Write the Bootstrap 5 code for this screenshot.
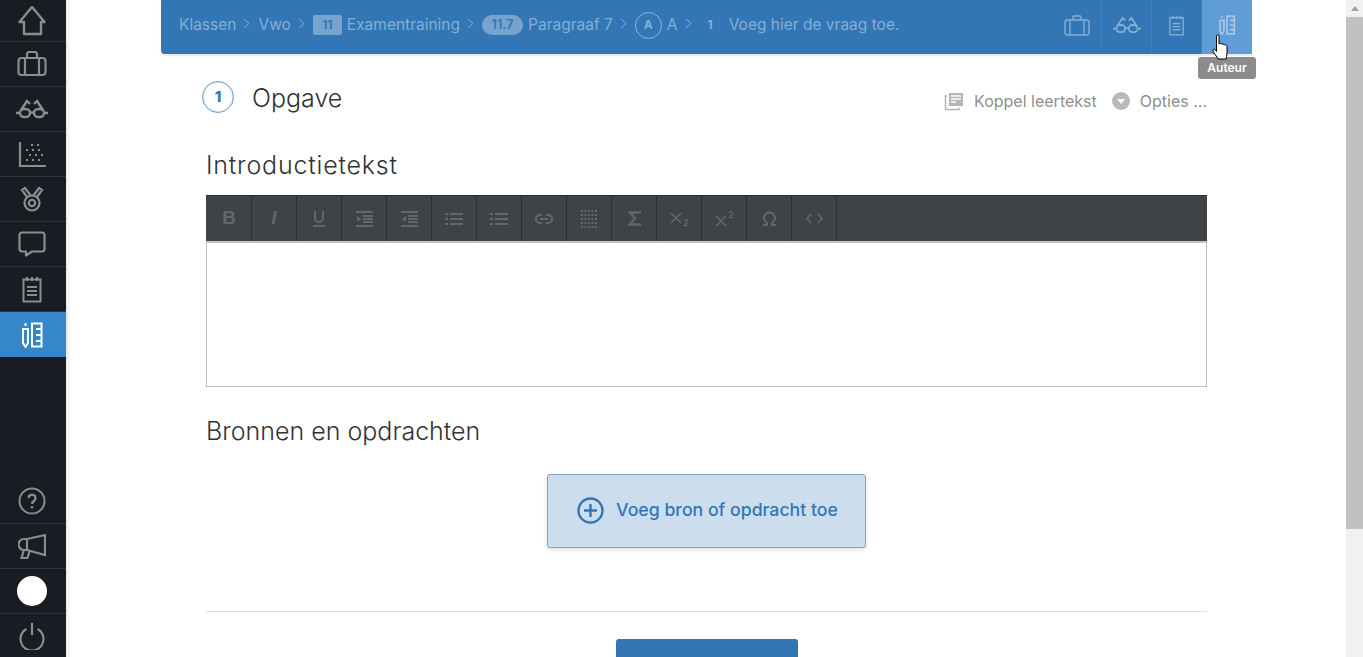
<!DOCTYPE html>
<html lang="nl"><head><meta charset="utf-8"><title>Opgave</title>
<link rel="stylesheet" href="https://cdn.jsdelivr.net/npm/bootstrap@5.3.0/dist/css/bootstrap.min.css">
<style>
html,body{height:657px;overflow:hidden;margin:0}
body{font-family:"Inter","Lato","Liberation Sans",sans-serif;color:#333;background:#fff}
svg{display:block}
.shell{height:657px}
.rail{width:66px;background:#181c23;flex:none}
.rail-item{height:45px;border-bottom:1px solid #31343a;color:#8a8c8f;padding-right:2px}
.rail-item.last{border-bottom:0;height:43px}
.rail-item.on{background:#3587c7;color:#fff;border-bottom:0}
.rail-top .rail-item:first-child{height:42px}
.rail-dot{width:30px;height:30px;border-radius:50%;background:#fff}
.stage{width:1280px;flex:none;position:relative;box-shadow:inset 6px 0 4px -4px #e4e4e4}
.topbar{margin-left:95px;width:1091px;height:54px;background:#3276b5;border-radius:0 0 0 4px;box-shadow:0 2px 2px #e8e8e8;color:#84aed5;font-size:15.500px}
.crumbs{padding-left:18px;height:50px;white-space:nowrap}
.sep{width:7px;height:11px;margin:0 8px 4px 7px;flex:none}
.tag-sq{background:#77a4ce;color:#3a78b3;font-weight:700;font-size:12px;width:29px;height:20px;border-radius:2px;margin-right:5px}
.tag-pill{background:#77a4ce;color:#3a78b3;font-weight:700;font-size:12.500px;width:41px;height:20px;border-radius:10px;margin-right:5px}
.tag-circ{width:27px;height:27px;border-radius:50%;border:1px solid #8fb6da;font-size:12px;font-weight:700;margin-right:5px}
.tools{height:54px;color:#84aed5}
.tool{height:54px;width:50px;border-right:1px solid #3f80bc;padding-bottom:4px}
.tool.hot{background:#609cd5;border-right:0;color:#a9cbe9}
.sheet{margin-left:140px;width:1001px}
.head{height:88px}
.num{width:32px;height:32px;border-radius:50%;border:1px solid #6d9ecb;color:#3276b5;font-weight:800;font-size:15px;margin-left:-4px;margin-top:-2px;box-shadow:inset 0 0 0 1px #d9e6f1}
.title1{font-size:25px;margin:0 0 0 18px;font-weight:300}
.acts{color:#8f8f8f;font-size:16px;gap:10px;margin-top:6px}
.gapr{margin-right:5px}
.h2x{font-size:25px;font-weight:300;margin:0;line-height:30px}
.intro{padding-top:8px;letter-spacing:.8px}
.bar{height:46px;background:#3f4246;border-top:1px solid #2b2d30;margin-top:15px;padding-left:1px}
.btnx{width:45px;height:45px;border-right:1px solid #2c2e31;color:#63666a}
.btnx.ital{font-family:"Liberation Sans",sans-serif;font-weight:900;font-size:19px}
.edit{height:146px;border:1px solid #bdbdbd;border-top:2px solid #c4c4c4}
.addwrap{margin-top:29px}
.addrow{margin-top:28px}
.addbtn{width:319px;height:74px;background:#ccdeed;border:1px solid #7ba6cf;border-radius:3px;color:#3276b5;font-size:17.700px;font-weight:500;box-shadow:0 2px 4px #e0e0e0;gap:12px;padding:0 0 2px 2px}
.rule{border-top:1px solid #ddd;margin-top:63px}
.save{width:182px;height:30px;background:#3276b5;border-radius:3px 3px 0 0;margin-top:27px}
.tip{position:absolute;left:1132px;top:57px;width:58px;height:22px;background:#8c8c8c;color:#fff;font-size:12px;font-weight:600;border-radius:3px}
.hand{position:absolute;left:1146px;top:34px}
.sbar{width:17px;background:#f1f1f1;flex:none}
.sbar-up{height:17px}
.sbar-thumb{height:512px;background:#c1c1c1}
</style></head><body>
<div class="d-flex shell">
<nav class="rail d-flex flex-column justify-content-between">
 <div class="rail-top">
  <div class="rail-item d-flex align-items-center justify-content-center"><svg width="28" height="31" viewBox="0 0 28 31" fill="none" stroke="currentColor" stroke-width="2.400" stroke-linejoin="round"><path d="M1.500 17 14 2l12.500 15H23v12H6V17z"/></svg></div>
  <div class="rail-item d-flex align-items-center justify-content-center"><svg width="30" height="26" viewBox="0 0 30 26" fill="none" stroke="currentColor" stroke-width="2.200"><rect x="1.500" y="7" width="27" height="17" rx="3"/><path d="M10 7V3a2 2 0 0 1 2-2h6a2 2 0 0 1 2 2v4M8 7v17M22 7v17"/></svg></div>
  <div class="rail-item d-flex align-items-center justify-content-center"><svg width="34" height="20" viewBox="0 0 34 20" fill="none" stroke="currentColor" stroke-width="2.400"><rect x="5" y="10" width="10" height="8" rx="4"/><rect x="19" y="10" width="10" height="8" rx="4"/><path d="M15 13.500h4M5 14H1M29 14h4M6 11l6-9 3 3M28 11 22 2l-3 3"/></svg></div>
  <div class="rail-item d-flex align-items-center justify-content-center"><svg width="28" height="27" viewBox="0 0 28 27" fill="none" stroke="currentColor"><path stroke-width="2.200" d="M2 1v24h26"/><path stroke-width="2" stroke-dasharray="2 4" d="M8 19h16M11 14h16M8 9h16"/><path stroke-width="2" stroke-dasharray="2 4" d="M13 4h10"/></svg></div>
  <div class="rail-item d-flex align-items-center justify-content-center"><svg width="26" height="26" viewBox="0 0 26 26" fill="none" stroke="currentColor" stroke-width="2.200"><circle cx="13" cy="17" r="7.500"/><circle cx="13" cy="17" r="3.200"/><path d="M8 11 3 4l3-2 6 8M18 11l5-7-3-2-6 8"/></svg></div>
  <div class="rail-item d-flex align-items-center justify-content-center"><svg width="28" height="27" viewBox="0 0 28 27" fill="none" stroke="currentColor" stroke-width="2.200" stroke-linejoin="round"><path d="M4 1.500h20a2.500 2.500 0 0 1 2.500 2.500v14a2.500 2.500 0 0 1-2.500 2.500H14l-6 4v-4H4A2.500 2.500 0 0 1 1.500 18V4A2.500 2.500 0 0 1 4 1.500z"/></svg></div>
  <div class="rail-item d-flex align-items-center justify-content-center"><svg width="20" height="27" viewBox="0 0 20 27" fill="none" stroke="currentColor" stroke-width="2"><rect x="1.500" y="3.500" width="17" height="22"/><path d="M5 1v4M10 1v4M15 1v4M5 11h10M5 15h10M5 19h10"/></svg></div>
  <div class="rail-item on d-flex align-items-center justify-content-center"><svg width="22" height="26" viewBox="0 0 22 26" fill="none" stroke="currentColor" stroke-width="2"><path d="M2 7h5v14l-2.500 4L2 21z"/><path d="M4.500 1v3"/><rect x="11" y="1.500" width="9.500" height="23"/><path d="M15 7h5M15 13h5M15 19h5"/></svg></div>
 </div>
 <div>
  <div class="rail-item d-flex align-items-center justify-content-center"><svg width="28" height="28" viewBox="0 0 28 28" fill="none" stroke="currentColor" stroke-width="2"><circle cx="14" cy="14" r="12.500"/><path stroke-width="2.400" d="M10.500 11a3.500 3.500 0 1 1 5.500 3c-1.400 1-2 1.400-2 3"/><path stroke-width="2.400" d="M14 19v2.400"/></svg></div>
  <div class="rail-item d-flex align-items-center justify-content-center"><svg width="28" height="27" viewBox="0 0 28 27" fill="none" stroke="currentColor" stroke-width="2.200"><path d="M9 6 27 2v20L9 17"/><path d="M9 6H6a5.500 5.500 0 0 0 0 11h3M9 6v11M6 17l-2.500 8h6l2-7"/></svg></div>
  <div class="rail-item d-flex align-items-center justify-content-center"><div class="rail-dot"></div></div>
  <div class="rail-item last d-flex align-items-center justify-content-center"><svg width="26" height="28" viewBox="0 0 26 28" fill="none" stroke="currentColor" stroke-width="2.200"><path d="M13 1v12"/><path d="M7.500 7a11.500 11.500 0 1 0 11 0"/></svg></div>
 </div>
</nav>
<main class="stage">
 <header class="topbar d-flex justify-content-between">
  <div class="crumbs d-flex align-items-center">
   <span>Klassen</span><svg class="sep" viewBox="0 0 7 11" fill="none" stroke="currentColor"><path d="m1 1 5 4.500L1 10"/></svg>
   <span>Vwo</span><svg class="sep" viewBox="0 0 7 11" fill="none" stroke="currentColor"><path d="m1 1 5 4.500L1 10"/></svg>
   <span class="tag-sq d-flex align-items-center justify-content-center">11</span><span>Examentraining</span><svg class="sep" viewBox="0 0 7 11" fill="none" stroke="currentColor"><path d="m1 1 5 4.500L1 10"/></svg>
   <span class="tag-pill d-flex align-items-center justify-content-center">11.7</span><span>Paragraaf 7</span><svg class="sep" viewBox="0 0 7 11" fill="none" stroke="currentColor"><path d="m1 1 5 4.500L1 10"/></svg>
   <span class="tag-circ d-flex align-items-center justify-content-center">A</span><span>A</span><svg class="sep" viewBox="0 0 7 11" fill="none" stroke="currentColor"><path d="m1 1 5 4.500L1 10"/></svg>
   <b class="ms-2 me-3" style="font-size:12px">1</b><span>Voeg hier de vraag toe.</span>
  </div>
  <div class="tools d-flex">
   <div class="tool d-flex align-items-center justify-content-center"><svg width="26" height="21" viewBox="0 0 26 21" fill="none" stroke="currentColor" stroke-width="1.400"><rect x="1" y="5" width="24" height="15" rx="2.500"/><path d="M9 5V2a1 1 0 0 1 1-1h6a1 1 0 0 1 1 1v3M6 5v15M20 5v15"/></svg></div>
   <div class="tool d-flex align-items-center justify-content-center"><svg width="30" height="18" viewBox="0 0 34 20" fill="none" stroke="currentColor" stroke-width="2"><rect x="5" y="10" width="10" height="8" rx="4"/><rect x="19" y="10" width="10" height="8" rx="4"/><path d="M15 13.500h4M5 14H1M29 14h4M6 11l6-9 3 3M28 11 22 2l-3 3"/></svg></div>
   <div class="tool d-flex align-items-center justify-content-center"><svg width="17" height="21" viewBox="0 0 20 27" fill="none" stroke="currentColor" stroke-width="1.800"><rect x="1.500" y="3.500" width="17" height="22"/><path d="M5 1v4M10 1v4M15 1v4M5 11h10M5 15h10M5 19h10"/></svg></div>
   <div class="tool hot d-flex align-items-center justify-content-center"><svg width="18" height="20" viewBox="0 0 22 26" fill="none" stroke="currentColor" stroke-width="2"><path d="M2 7h5v14l-2.500 4L2 21z"/><path d="M4.500 1v3"/><rect x="11" y="1.500" width="9.500" height="23"/><path d="M15 7h5M15 13h5M15 19h5"/></svg></div>
  </div>
 </header>
 <div class="sheet">
  <div class="head d-flex justify-content-between align-items-center">
   <div class="d-flex align-items-center"><span class="num d-flex align-items-center justify-content-center">1</span><h1 class="title1">Opgave</h1></div>
   <div class="acts d-flex align-items-center">
    <svg width="20" height="19" viewBox="0 0 20 19" fill="none" stroke="#b5b5b5" stroke-width="1.500"><path d="M3 4H1.500v13.500H15V16"/><rect x="5" y="1" width="14" height="13" fill="#b5b5b5" stroke="none"/><path stroke="#fff" d="M7 4h10M7 7h10M7 10h5"/></svg>
    <span class="gapr">Koppel leertekst</span>
    <svg width="18" height="18" viewBox="0 0 18 18"><circle cx="9" cy="9" r="9" fill="#b9b9b9"/><path d="M5 7h8l-4 5z" fill="#fff"/></svg>
    <span>Opties ...</span>
   </div>
  </div>
  <h2 class="h2x intro">Introductietekst</h2>
  <div class="bar d-flex">
   <div class="btnx ital d-flex align-items-center justify-content-center">B</div>
   <div class="btnx ital fst-italic d-flex align-items-center justify-content-center">I</div>
   <div class="btnx d-flex align-items-center justify-content-center"><svg width="14" height="17" viewBox="0 0 14 17" fill="none" stroke="currentColor" stroke-width="2"><path d="M3 1v7a4 4 0 0 0 8 0V1M1 16h12"/></svg></div>
   <div class="btnx d-flex align-items-center justify-content-center"><svg width="17" height="17" viewBox="0 0 17 17" fill="none" stroke="currentColor" stroke-width="2"><path d="M0 2h17M7 6h10M7 9h10M7 12h10M0 16h17"/><path d="M1 6v6l4-3z" fill="currentColor" stroke="none"/></svg></div>
   <div class="btnx d-flex align-items-center justify-content-center"><svg width="17" height="17" viewBox="0 0 17 17" fill="none" stroke="currentColor" stroke-width="2"><path d="M0 2h17M7 6h10M7 9h10M7 12h10M0 16h17"/><path d="M5 6v6L1 9z" fill="currentColor" stroke="none"/></svg></div>
   <div class="btnx d-flex align-items-center justify-content-center"><svg width="18" height="14" viewBox="0 0 18 14" fill="none" stroke="currentColor" stroke-width="2"><path d="M5 2h13M5 7h13M5 12h13M0 2h3M0 7h3M0 12h3"/></svg></div>
   <div class="btnx d-flex align-items-center justify-content-center"><svg width="18" height="14" viewBox="0 0 18 14" fill="none" stroke="currentColor" stroke-width="2"><path d="M5 2h13M5 7h13M5 12h13M0 2h3M0 7h3M0 12h3"/></svg></div>
   <div class="btnx d-flex align-items-center justify-content-center"><svg width="18" height="10" viewBox="0 0 18 10" fill="none" stroke="currentColor" stroke-width="2"><path d="M7 1H5a4 4 0 0 0 0 8h2M11 1h2a4 4 0 0 1 0 8h-2M5 5h8"/></svg></div>
   <div class="btnx d-flex align-items-center justify-content-center"><svg width="18" height="18" viewBox="0 0 18 18" fill="none" stroke="currentColor" stroke-width="2" stroke-dasharray="2 1.500"><path d="M1 1h16M1 5h16M1 9h16M1 13h16M1 17h16"/></svg></div>
   <div class="btnx d-flex align-items-center justify-content-center"><svg width="13" height="15" viewBox="0 0 13 15" fill="none" stroke="currentColor" stroke-width="2.400"><path d="M13 1.500H2l5 6-5 6h11"/></svg></div>
   <div class="btnx d-flex align-items-center justify-content-center"><svg width="19" height="24" viewBox="0 -4 19 24"><path d="m1 2 10 10M11 2 1 12" fill="none" stroke="currentColor" stroke-width="1.700"/><text x="13" y="15" font-size="9" font-weight="700" fill="currentColor">2</text></svg></div>
   <div class="btnx d-flex align-items-center justify-content-center"><svg width="19" height="24" viewBox="0 -4 19 24"><path d="m1 5 10 10M11 5 1 15" fill="none" stroke="currentColor" stroke-width="1.700"/><text x="13" y="7" font-size="9" font-weight="700" fill="currentColor">2</text></svg></div>
   <div class="btnx d-flex align-items-center justify-content-center"><svg width="15" height="15" viewBox="0 0 15 15" fill="none" stroke="currentColor" stroke-width="2"><path d="M1 14h4v-2a5.500 5.500 0 1 1 5 0v2h4"/></svg></div>
   <div class="btnx d-flex align-items-center justify-content-center"><svg width="17" height="11" viewBox="0 0 17 11" fill="none" stroke="currentColor" stroke-width="1.700"><path d="M5 1 1 5.500 5 10M12 1l4 4.500-4 4.500"/></svg></div>
  </div>
  <div class="edit"></div>
  <h2 class="h2x addwrap">Bronnen en opdrachten</h2>
  <div class="addrow d-flex justify-content-center"><div class="addbtn d-flex align-items-center justify-content-center"><svg width="27" height="27" viewBox="0 0 27 27" fill="none" stroke="currentColor" stroke-width="2.400"><circle cx="13.500" cy="13.500" r="12"/><path d="M13.500 7v13M7 13.500h13"/></svg><span>Voeg bron of opdracht toe</span></div></div>
  <div class="rule"></div>
  <div class="d-flex justify-content-center"><div class="save"></div></div>
 </div>
 <div class="tip d-flex align-items-center justify-content-center">Auteur</div>
 <svg class="hand" width="17" height="27" viewBox="0 0 16 27"><path d="M4 1.500c1-1 2.500-.5 2.500 1V10c1-1 2.500-1 3 .5 1-.8 2.300-.5 2.800.7 1-.5 2.200 0 2.200 1.300V20c0 2-1 3-1 5H5.500c-.5-2-4.500-6-5-8-.3-1.500 1-2.200 2-1.500l1.500 2V2.500z" fill="#fff" stroke="#000"/></svg>
</main>
<aside class="sbar"><div class="sbar-up d-flex align-items-center justify-content-center"><svg width="8" height="5" viewBox="0 0 8 5"><path d="M4 0l4 5H0z" fill="#a3a3a3"/></svg></div><div class="sbar-thumb"></div></aside>
</div>
</body></html>
